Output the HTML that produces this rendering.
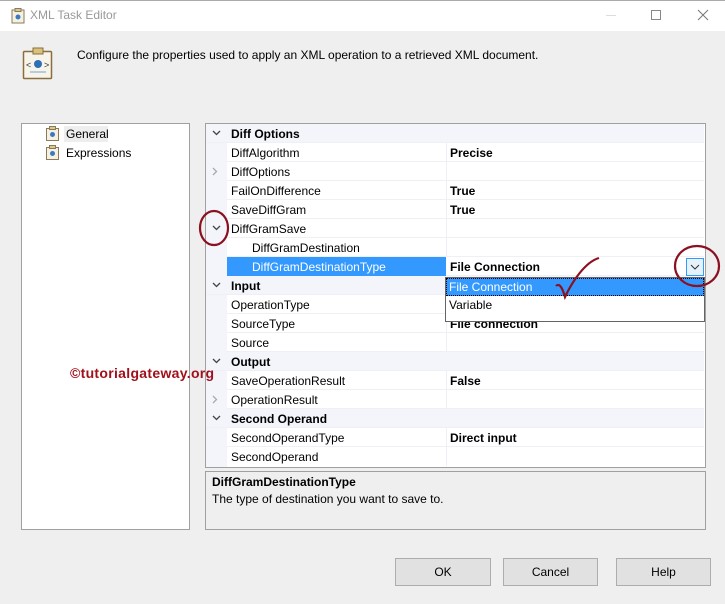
<!DOCTYPE html>
<html><head><meta charset="utf-8"><style>
*{margin:0;padding:0;box-sizing:border-box}
body{width:725px;height:604px;background:#efefef;font-family:"Liberation Sans",sans-serif;font-size:12px;color:#000;position:relative;overflow:hidden}
.a{position:absolute}
.row{position:absolute;left:206px;width:498px;height:19px;border-bottom:1px solid #eef0f5}
.row .n{position:absolute;left:25px;top:3px;white-space:nowrap}
.row .v{position:absolute;left:244px;top:3px;font-weight:bold;white-space:nowrap}
.row .vc{position:absolute;left:240px;top:0;width:1px;height:19px;background:#eef0f5}
.cat{background:#f3f5fa}
.cat .n{font-weight:bold}
.dn{position:absolute;left:6px;top:6px}
.rt{position:absolute;left:-15px;top:5px}
.btn{position:absolute;top:558px;height:28px;background:#e1e1e1;border:1px solid #adadad;text-align:center;line-height:26px}
</style></head><body>
<div class="a" style="left:0;top:0;width:725px;height:31px;background:#fff;border-top:1px solid #aaa"></div>
<svg class="a" style="left:10px;top:8px" width="16" height="16"><rect x="2" y="2" width="12" height="13" fill="#f5f0e0" stroke="#8a7a5a"/><rect x="5" y="0.5" width="6" height="3" fill="#d8c890" stroke="#8a7a5a"/><circle cx="8" cy="9" r="2.5" fill="#3a7ac0"/></svg>
<div class="a" style="left:30px;top:8px;color:#999;font-size:12px">XML Task Editor</div>
<div class="a" style="left:606px;top:15px;width:10px;height:1px;background:#ddd"></div>
<div class="a" style="left:651px;top:10px;width:10px;height:10px;border:1px solid #888"></div>
<svg class="a" style="left:697px;top:9px" width="12" height="12"><path d="M1 1L11 11M11 1L1 11" stroke="#777" stroke-width="1"/></svg>
<svg class="a" style="left:22px;top:47px" width="32" height="33"><rect x="1.5" y="4.5" width="28" height="27" rx="1" fill="#f7f4ea" stroke="#8a6e3e" stroke-width="1.5"/><rect x="11" y="1" width="10" height="6" fill="#d9c27a" stroke="#8a6e3e"/><text x="4" y="21" font-size="9" fill="#333" font-family="Liberation Sans">&lt;</text><text x="22" y="21" font-size="9" fill="#333" font-family="Liberation Sans">&gt;</text><circle cx="16" cy="17" r="4" fill="#2f6fb5"/><path d="M8 25h16" stroke="#7aa0d0"/></svg>
<div class="a" style="left:77px;top:48px">Configure the properties used to apply an XML operation to a retrieved XML document.</div>
<div class="a" style="left:21px;top:123px;width:169px;height:407px;background:#fff;border:1px solid #a0a0a0"></div>
<svg class="a" style="left:45px;top:126px" width="16" height="15"><rect x="1.5" y="2.5" width="12" height="12" fill="#f5f0e0" stroke="#8a7a5a"/><rect x="4.5" y="0.5" width="6" height="3" fill="#d8c890" stroke="#8a7a5a"/><circle cx="7.5" cy="8.5" r="2.5" fill="#3a7ac0"/></svg>
<div class="a" style="left:64px;top:126px;width:44px;height:16px;background:#eee"></div>
<div class="a" style="left:66px;top:127px">General</div>
<svg class="a" style="left:45px;top:145px" width="16" height="15"><rect x="1.5" y="2.5" width="12" height="12" fill="#f5f0e0" stroke="#8a7a5a"/><rect x="4.5" y="0.5" width="6" height="3" fill="#d8c890" stroke="#8a7a5a"/><circle cx="7.5" cy="8.5" r="2.5" fill="#3a7ac0"/></svg>
<div class="a" style="left:66px;top:146px">Expressions</div>
<div class="a" style="left:205px;top:123px;width:501px;height:345px;background:#fff;border:1px solid #a0a0a0"></div>
<div class="a" style="left:206px;top:124px;width:21px;height:343px;background:#f3f5fa"></div>
<div class="row cat" style="top:124px"><svg class="dn" width="9" height="6"><path d="M1 1L4.5 4.5L8 1" fill="none" stroke="#444" stroke-width="1.3"/></svg><span class="n">Diff Options</span></div>
<div class="row" style="top:143px;left:227px;width:477px"><span class="n" style="left:4px">DiffAlgorithm</span><span class="vc" style="left:219px"></span><span class="v" style="left:223px">Precise</span></div>
<div class="row" style="top:162px;left:227px;width:477px"><svg class="rt" width="6" height="9"><path d="M1 1L4.5 4.5L1 8" fill="none" stroke="#aaa" stroke-width="1.3"/></svg><span class="n" style="left:4px">DiffOptions</span><span class="vc" style="left:219px"></span></div>
<div class="row" style="top:181px;left:227px;width:477px"><span class="n" style="left:4px">FailOnDifference</span><span class="vc" style="left:219px"></span><span class="v" style="left:223px">True</span></div>
<div class="row" style="top:200px;left:227px;width:477px"><span class="n" style="left:4px">SaveDiffGram</span><span class="vc" style="left:219px"></span><span class="v" style="left:223px">True</span></div>
<div class="row" style="top:219px;left:227px;width:477px"><svg class="dn" style="left:-15px" width="9" height="6"><path d="M1 1L4.5 4.5L8 1" fill="none" stroke="#444" stroke-width="1.3"/></svg><span class="n" style="left:4px">DiffGramSave</span><span class="vc" style="left:219px"></span></div>
<div class="row" style="top:238px;left:227px;width:477px"><span class="n" style="left:25px">DiffGramDestination</span><span class="vc" style="left:219px"></span></div>
<div class="row" style="top:257px;left:227px;width:477px"><div class="a" style="left:0;top:0;width:219px;height:19px;background:#3399ff"></div><span class="n" style="left:25px;color:#fff">DiffGramDestinationType</span><span class="v" style="left:223px">File Connection</span></div>
<div class="a" style="left:686px;top:258px;width:18px;height:18px;border:1px solid #3399ff;background:#e5f1fb"></div>
<svg class="a" style="left:690px;top:263px" width="10" height="8"><path d="M1 2L5 6L9 2" fill="none" stroke="#333"/></svg>
<div class="row cat" style="top:276px"><svg class="dn" width="9" height="6"><path d="M1 1L4.5 4.5L8 1" fill="none" stroke="#444" stroke-width="1.3"/></svg><span class="n">Input</span></div>
<div class="row" style="top:295px;left:227px;width:477px"><span class="n" style="left:4px">OperationType</span><span class="vc" style="left:219px"></span></div>
<div class="row" style="top:314px;left:227px;width:477px"><span class="n" style="left:4px">SourceType</span><span class="vc" style="left:219px"></span><span class="v" style="left:223px">File connection</span></div>
<div class="row" style="top:333px;left:227px;width:477px"><span class="n" style="left:4px">Source</span><span class="vc" style="left:219px"></span></div>
<div class="row cat" style="top:352px"><svg class="dn" width="9" height="6"><path d="M1 1L4.5 4.5L8 1" fill="none" stroke="#444" stroke-width="1.3"/></svg><span class="n">Output</span></div>
<div class="row" style="top:371px;left:227px;width:477px"><span class="n" style="left:4px">SaveOperationResult</span><span class="vc" style="left:219px"></span><span class="v" style="left:223px">False</span></div>
<div class="row" style="top:390px;left:227px;width:477px"><svg class="rt" width="6" height="9"><path d="M1 1L4.5 4.5L1 8" fill="none" stroke="#aaa" stroke-width="1.3"/></svg><span class="n" style="left:4px">OperationResult</span><span class="vc" style="left:219px"></span></div>
<div class="row cat" style="top:409px"><svg class="dn" width="9" height="6"><path d="M1 1L4.5 4.5L8 1" fill="none" stroke="#444" stroke-width="1.3"/></svg><span class="n">Second Operand</span></div>
<div class="row" style="top:428px;left:227px;width:477px"><span class="n" style="left:4px">SecondOperandType</span><span class="vc" style="left:219px"></span><span class="v" style="left:223px">Direct input</span></div>
<div class="row" style="top:447px;left:227px;width:477px;border:0"><span class="n" style="left:4px">SecondOperand</span><span class="vc" style="left:219px"></span></div>
<div class="a" style="left:70px;top:365px;color:#a0101a;font-weight:bold;font-size:14px;letter-spacing:0.3px">©tutorialgateway.org</div>
<div class="a" style="left:445px;top:277px;width:260px;height:45px;background:#fff;border:1px solid #646464"></div>
<div class="a" style="left:446px;top:278px;width:258px;height:18px;background:#3399ff;border:1px dotted #000"></div>
<div class="a" style="left:449px;top:280px;color:#fff">File Connection</div>
<div class="a" style="left:449px;top:298px">Variable</div>
<div class="a" style="left:205px;top:471px;width:501px;height:59px;border:1px solid #a0a0a0"></div>
<div class="a" style="left:212px;top:475px;font-weight:bold">DiffGramDestinationType</div>
<div class="a" style="left:212px;top:492px">The type of destination you want to save to.</div>
<div class="btn" style="left:395px;width:96px">OK</div>
<div class="btn" style="left:503px;width:95px">Cancel</div>
<div class="btn" style="left:616px;width:95px">Help</div>
<svg class="a" style="left:0;top:0" width="725" height="604" fill="none" stroke="#8b1020" stroke-width="2.2">
<ellipse cx="214" cy="228" rx="14" ry="17"/>
<ellipse cx="697" cy="266" rx="22" ry="20"/>
<path d="M556 286C560 282 563 290 565 297C572 282 585 262 599 258"/>
</svg>
</body></html>
